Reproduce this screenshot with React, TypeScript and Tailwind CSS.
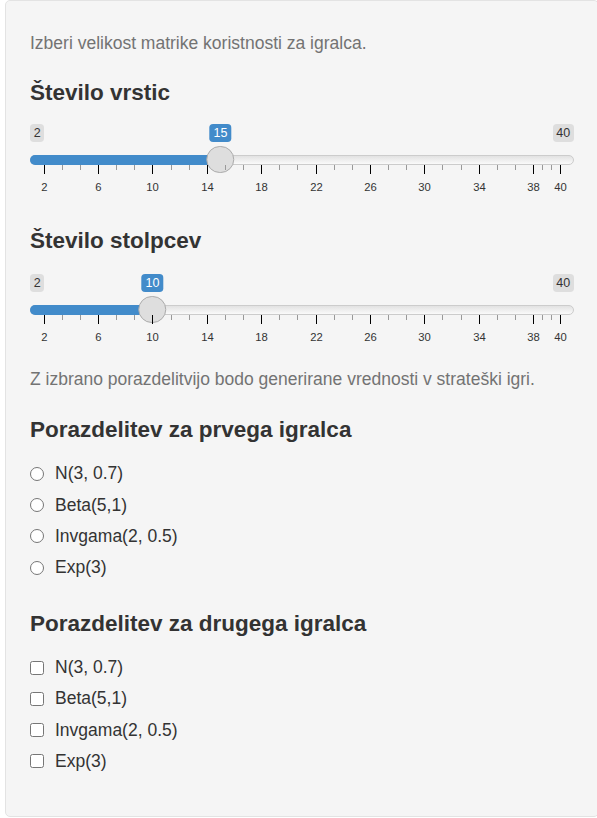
import { useState } from "react";

const MIN = 2;
const MAX = 40;
const TRACK_W = 544;
const HANDLE = 27.5;

function pos(v: number) {
  return HANDLE / 2 + ((v - MIN) / (MAX - MIN)) * (TRACK_W - HANDLE);
}

function buildTicks() {
  const ticks: { v: number; major: boolean }[] = [];
  for (let v = MIN; v < MAX - 2; v += 4) {
    ticks.push({ v, major: true });
    ticks.push({ v: v + 4 / 3, major: false });
    ticks.push({ v: v + 8 / 3, major: false });
  }
  ticks.push({ v: 38, major: true });
  ticks.push({ v: 38 + 2 / 3, major: false });
  ticks.push({ v: 38 + 4 / 3, major: false });
  ticks.push({ v: 40, major: true });
  return ticks;
}

const ticks = buildTicks();

const tag = "h-[18px] rounded-[3.75px] px-[3.75px] text-[12.5px] leading-[18px]";

function Slider({ value }: { value: number }) {
  const x = pos(value);
  return (
    <div className="w-[544px]">
      {/* min / max / current value */}
      <div className="relative flex justify-between pt-[4px] text-[#333]">
        <span className={`${tag} bg-[#dedede]`}>{MIN}</span>
        <span className={`${tag} bg-[#dedede]`}>{MAX}</span>
        <span
          className={`${tag} absolute top-[4px] -translate-x-1/2 bg-[#428bca] text-white`}
          style={{ left: x }}
        >
          {value}
        </span>
      </div>

      {/* track */}
      <div className="relative mt-[13px] h-[10px] rounded-full border border-[#cccccc] bg-gradient-to-b from-[#e2e2e2] to-[#fafafa]">
        <div
          className="absolute -left-px -top-px h-[10px] rounded-l-full bg-[#428bca]"
          style={{ width: x }}
        />
        <div
          className="absolute -top-[10px] h-[27.5px] w-[27.5px] -translate-x-1/2 rounded-full border border-[#ababab] bg-[#dedede]"
          style={{ left: x - 1 }}
        />
      </div>

      {/* grid */}
      <div className="relative h-[35px]">
        {ticks.map((t, i) => (
          <span
            key={i}
            className={
              t.major
                ? "absolute top-0 h-[9px] w-px bg-black"
                : "absolute top-0 h-[5px] w-px bg-[#999]"
            }
            style={{ left: Math.round(pos(t.v)) }}
          />
        ))}
        {ticks
          .filter((t) => t.major)
          .map((t) => (
            <span
              key={t.v}
              className="absolute top-[14px] -translate-x-1/2 text-[11.25px] leading-[16px] text-[#333]"
              style={{ left: Math.round(pos(t.v)) + 0.5 }}
            >
              {t.v}
            </span>
          ))}
      </div>
    </div>
  );
}

const options = ["N(3, 0.7)", "Beta(5,1)", "Invgama(2, 0.5)", "Exp(3)"];

function RadioList() {
  const [sel, setSel] = useState<number | null>(null);
  return (
    <div className="flex flex-col">
      {options.map((o, i) => (
        <label key={o} className="flex h-[31.25px] items-center gap-[11px]" onClick={() => setSel(i)}>
          <span className="flex h-[14px] w-[14px] items-center justify-center rounded-full border border-[#767676] bg-white">
            {sel === i && <span className="h-[8px] w-[8px] rounded-full bg-[#0075ff]" />}
          </span>
          <span>{o}</span>
        </label>
      ))}
    </div>
  );
}

function CheckList() {
  const [sel, setSel] = useState<number[]>([]);
  return (
    <div className="flex flex-col">
      {options.map((o, i) => (
        <label
          key={o}
          className="flex h-[31.25px] items-center gap-[11px]"
          onClick={() => setSel(sel.includes(i) ? sel.filter((s) => s !== i) : [...sel, i])}
        >
          <span
            className={
              sel.includes(i)
                ? "h-[14px] w-[14px] rounded-[2.5px] border border-[#0075ff] bg-[#0075ff]"
                : "h-[14px] w-[14px] rounded-[2.5px] border border-[#767676] bg-white"
            }
          />
          <span>{o}</span>
        </label>
      ))}
    </div>
  );
}

const h3 = "text-[22.5px] font-bold leading-[24.75px]";

export default function App() {
  return (
    <div className="h-[818px] w-[597px] overflow-hidden bg-white font-['Liberation_Sans',Arial,sans-serif] text-[17.5px] leading-[25px] text-[#333]">
      <div className="ml-[5px] flex h-[817px] w-[594px] flex-col rounded-[5px] border border-[#e3e3e3] bg-[#f5f5f5] px-[24px] pt-[30px]">
        <p className="text-[#737373]">Izberi velikost matrike koristnosti za igralca.</p>

        <h3 className={`mt-[25px] ${h3}`}>Število vrstic</h3>
        <div className="mt-[14px]">
          <Slider value={15} />
        </div>

        <h3 className={`mt-[29px] ${h3}`}>Število stolpcev</h3>
        <div className="mt-[16px]">
          <Slider value={10} />
        </div>

        <p className="mt-[17px] text-[#737373]">
          Z izbrano porazdelitvijo bodo generirane vrednosti v strateški igri.
        </p>

        <h3 className={`mt-[26px] ${h3}`}>Porazdelitev za prvega igralca</h3>
        <div className="mt-[16px]">
          <RadioList />
        </div>

        <h3 className={`mt-[29px] ${h3}`}>Porazdelitev za drugega igralca</h3>
        <div className="mt-[15px]">
          <CheckList />
        </div>
      </div>
    </div>
  );
}
